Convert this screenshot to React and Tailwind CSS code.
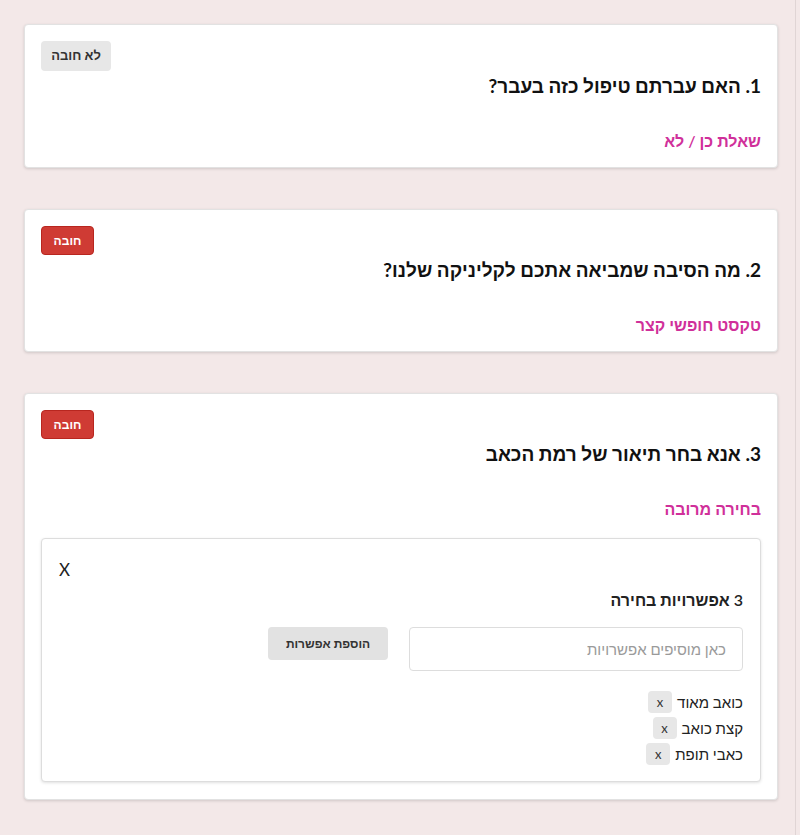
import React, { useState } from 'react';

const questions = [
  { id: 1, title: '1. האם עברתם טיפול כזה בעבר?', type: 'שאלת כן / לא', required: false },
  { id: 2, title: '2. מה הסיבה שמביאה אתכם לקליניקה שלנו?', type: 'טקסט חופשי קצר', required: true },
  { id: 3, title: '3. אנא בחר תיאור של רמת הכאב', type: 'בחירה מרובה', required: true, options: true },
];

function Badge({ required }) {
  if (required) {
    return (
      <span className="inline-flex items-center justify-center h-[29px] w-[53px] rounded-[4px] bg-[#cf3b34] border border-[#b8261f] text-white text-[12px] font-bold">
        חובה
      </span>
    );
  }
  return (
    <span className="inline-flex items-center justify-center h-[30px] w-[70px] rounded-[4px] bg-[#e7e7e7] text-[#333] text-[13px] font-semibold">
      לא חובה
    </span>
  );
}

function OptionsEditor() {
  const [options, setOptions] = useState(['כואב מאוד', 'קצת כואב', 'כאבי תופת']);
  const [value, setValue] = useState('');

  return (
    <div className="mt-[17px] rounded-[4px] border border-[#ddd] bg-white shadow-[0_1px_3px_rgba(0,0,0,0.12)] px-[17px] pt-[21px] pb-[16px]">
      <div className="flex justify-end">
        <button className="text-[17px] text-[#222] leading-[20px]">X</button>
      </div>
      <div className="mt-[9px] text-[16px] font-semibold text-[#222] leading-[22px]">3 אפשרויות בחירה</div>
      <div className="mt-[16px] flex items-start gap-[21px]">
        <input
          value={value}
          onChange={(e) => setValue(e.target.value)}
          placeholder="כאן מוסיפים אפשרויות"
          className="w-[334px] h-[44px] rounded-[4px] border border-[#ddd] px-[16px] text-[15px] placeholder:text-[#9a9a9a] focus:outline-none"
        />
        <button
          onClick={() => {
            if (value) setOptions([...options, value]);
            setValue('');
          }}
          className="w-[120px] h-[33px] rounded-[4px] bg-[#e2e2e2] text-[12px] font-semibold text-[#333]"
        >
          הוספת אפשרות
        </button>
      </div>
      <div className="mt-[20px] flex flex-col gap-[4px]">
        {options.map((o, i) => (
          <div key={i} className="flex items-center gap-[5px] h-[22px]">
            <span className="text-[15px] text-[#222]">{o}</span>
            <button
              onClick={() => setOptions(options.filter((_, j) => j !== i))}
              className="h-[22px] w-[24px] rounded-[4px] bg-[#e7e7e7] text-[13px] text-[#333] leading-none"
            >
              x
            </button>
          </div>
        ))}
      </div>
    </div>
  );
}

export default function App() {
  return (
    <div className="min-h-screen bg-[#f3e8e8]" style={{ fontFamily: "Lato, 'Liberation Sans', sans-serif" }}>
      <div dir="rtl" className="w-[796px] min-h-screen border-r border-[#e0d5d5] pt-[24px] pb-[35px] pr-[17px] pl-[24px] flex flex-col gap-[41px]">
        {questions.map((q) => (
          <div
            key={q.id}
            className={`bg-white rounded-[4px] border border-[#e2e2e2] shadow-[0_1px_3px_rgba(0,0,0,0.15)] px-[16px] pt-[16px] ${q.options ? 'pb-[17px]' : 'pb-[14px]'}`}
          >
            <div className="flex justify-end">
              <Badge required={q.required} />
            </div>
            <h2 className="mt-[3px] text-[19px] font-bold text-[#111] leading-[24px]">{q.title}</h2>
            <div className="mt-[31px] text-[16px] font-semibold text-[#d0309a] leading-[24px]">{q.type}</div>
            {q.options && <OptionsEditor />}
          </div>
        ))}
      </div>
    </div>
  );
}
